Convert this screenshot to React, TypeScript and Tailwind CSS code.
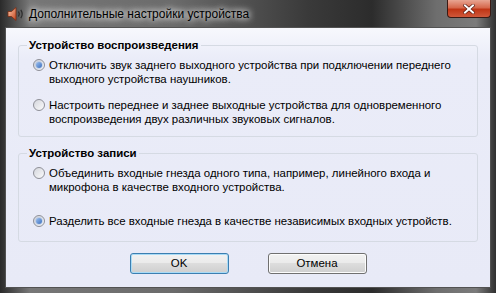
import React from 'react';

const FONT = { fontFamily: '"Liberation Sans", Arial, sans-serif' };

const PLAYBACK = [
  {
    lines: ['Отключить звук заднего выходного устройства при подключении переднего', 'выходного устройства наушников.'],
    checked: true,
  },
  {
    lines: ['Настроить переднее и заднее выходные устройства для одновременного', 'воспроизведения двух различных звуковых сигналов.'],
    checked: false,
  },
];

const RECORDING = [
  {
    lines: ['Объединить входные гнезда одного типа, например, линейного входа и', 'микрофона в качестве входного устройства.'],
    checked: false,
  },
  {
    lines: ['Разделить все входные гнезда в качестве независимых входных устройств.'],
    checked: true,
  },
];

function Radio({ checked }: { checked: boolean }) {
  return (
    <div className="mt-[1px] flex h-[12px] w-[12px] shrink-0 items-center justify-center rounded-full border border-[#8e8f97] bg-gradient-to-br from-[#d4d6dc] to-[#fbfbfc]">
      {checked && (
        <div className="h-[6px] w-[6px] rounded-full bg-gradient-to-br from-[#9cc0f0] to-[#3c6fbd] shadow-[0_0_2px_#5b8ad0]" />
      )}
    </div>
  );
}

function Option({ lines, checked }: { lines: string[]; checked: boolean }) {
  return (
    <div className="flex items-start gap-[4px]">
      <Radio checked={checked} />
      <div className="whitespace-nowrap text-[11.45px] leading-[14px] text-black">
        {lines.map((l) => (
          <div key={l}>{l}</div>
        ))}
      </div>
    </div>
  );
}

function Group({ title, items, gap, pb }: { title: string; items: typeof PLAYBACK; gap: string; pb: string }) {
  return (
    <fieldset className={`rounded-[3px] border border-[#d5dae3] pl-[14px] pt-[6px] ${pb}`}>
      <legend className="ml-[-6px] px-[2px] text-[11.45px] leading-[14px] font-bold text-black">{title}</legend>
      <div className={`flex flex-col ${gap}`}>
        {items.map((it) => (
          <Option key={it.lines[0]} {...it} />
        ))}
      </div>
    </fieldset>
  );
}

function SpeakerIcon() {
  return (
    <svg width="18" height="16" viewBox="0 0 18 16">
      <defs>
        <linearGradient id="spk" x1="0" y1="0" x2="1" y2="1">
          <stop offset="0" stopColor="#ffd0b0" />
          <stop offset="1" stopColor="#c2401a" />
        </linearGradient>
      </defs>
      <path d="M1 5.5h3.5L9 1.5v13L4.5 10.5H1z" fill="url(#spk)" stroke="#7a2a10" strokeWidth="0.8" />
      <path d="M11.5 5.5q1.6 2.5 0 5" fill="none" stroke="#2a2a2a" strokeWidth="1.2" />
      <path d="M13.8 3.8q2.8 4.2 0 8.4" fill="none" stroke="#2a2a2a" strokeWidth="1.2" />
    </svg>
  );
}

export default function App() {
  return (
    <div
      className="flex h-[293px] w-[496px] flex-col overflow-hidden bg-[linear-gradient(90deg,#2a2a2a_0%,#777_6%,#6b6b6b_35%,#3a3a3a_62%,#2c2c2c_75%,#6e6e6e_88%,#7b7b7b_96%,#303030_100%)]"
      style={FONT}
    >
      <div className="flex h-[27px] shrink-0 items-start justify-between">
        <div className="flex items-center gap-[4px] pl-[7px] pt-[5px]">
          <SpeakerIcon />
          <span className="text-[12px] text-black [text-shadow:0_0_6px_#fff,0_0_8px_#fff]">
            Дополнительные настройки устройства
          </span>
        </div>
        <div className="mr-[5px] flex h-[18px] w-[44px] items-center justify-center rounded-b-[4px] border border-t-0 border-[#3a1a14] bg-[linear-gradient(180deg,#e8a592_0%,#d6684c_45%,#c03515_55%,#d0583a_100%)]">
          <svg width="12" height="10" viewBox="0 0 12 10">
            <path d="M2 1.5l8 7M10 1.5l-8 7" stroke="#5a1a10" strokeWidth="3.4" strokeLinecap="square" />
            <path d="M2 1.5l8 7M10 1.5l-8 7" stroke="#fff" strokeWidth="2" strokeLinecap="square" />
          </svg>
        </div>
      </div>
      <div className="mx-[5px] mb-[5px] flex flex-1 flex-col border border-[#525252] bg-[linear-gradient(180deg,#f7f8fd_0%,#eaecf8_12%,#e8eaf7_100%)] px-[12px] pt-[10px]">
        <div className="flex flex-col gap-[9px]">
          <Group title="Устройство воспроизведения" items={PLAYBACK} gap="gap-[12px]" pb="pb-[10px]" />
          <Group title="Устройство записи" items={RECORDING} gap="gap-[20px]" pb="pb-[13px]" />
        </div>
        <div className="mt-[11px] flex justify-center gap-[39px]">
          <button className="h-[21px] w-[99px] rounded-[3px] border border-[#3c7fb1] bg-[linear-gradient(180deg,#f2f2f2_0%,#ebebeb_45%,#dddddd_50%,#cfcfcf_100%)] text-[11.45px] text-black shadow-[inset_0_0_0_1px_#a9dbf6]">
            OK
          </button>
          <button className="h-[21px] w-[99px] rounded-[3px] border border-[#707070] bg-[linear-gradient(180deg,#f2f2f2_0%,#ebebeb_45%,#dddddd_50%,#cfcfcf_100%)] text-[11.45px] text-black shadow-[inset_0_0_0_1px_#fcfcfc]">
            Отмена
          </button>
        </div>
      </div>
    </div>
  );
}
